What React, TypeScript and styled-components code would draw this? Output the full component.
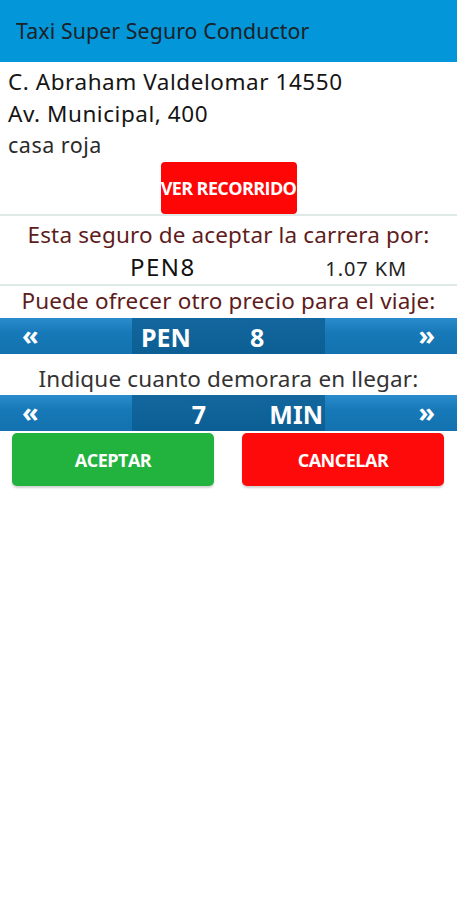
import React from "react";
import styled, { createGlobalStyle } from "styled-components";

const Global = createGlobalStyle`
  html, body { margin: 0; padding: 0; background: #ffffff; }
  body { font-family: "Noto Sans", "Open Sans", sans-serif; }
  * { box-sizing: border-box; }
`;

const Screen = styled.div`
  width: 457px;
  min-height: 900px;
  background: #ffffff;
  display: flex;
  flex-direction: column;
`;

const AppBar = styled.header`
  height: 62px;
  background: #0396d9;
  display: flex;
  align-items: center;
  padding-left: 16px;
  padding-bottom: 1px;
`;

const Title = styled.h1`
  margin: 0;
  font-size: 21.3px;
  font-weight: 400;
  color: #1b2228;
  letter-spacing: 0.1px;
`;

const Address = styled.div`
  display: flex;
  flex-direction: column;
  padding: 4px 0 0 8px;
`;

const AddressLine = styled.div<{ $small?: boolean }>`
  font-size: ${(p) => (p.$small ? "21.5px" : "22.5px")};
  line-height: ${(p) => (p.$small ? "30px" : "32px")};
  letter-spacing: ${(p) => (p.$small ? "0.5px" : "0.55px")};
  color: ${(p) => (p.$small ? "#2a2a2a" : "#151515")};
`;

const Center = styled.div`
  display: flex;
  justify-content: center;
  padding-top: 2px;
`;

const RedSmallButton = styled.button`
  width: 136px;
  height: 52px;
  border: none;
  border-radius: 4px;
  background: #ff0606;
  color: #ffffff;
  font-family: "Open Sans", "Noto Sans", sans-serif;
  font-weight: 700;
  font-size: 18px;
  letter-spacing: -0.6px;
  padding: 0;
  white-space: nowrap;
  overflow: hidden;
  display: flex;
  align-items: center;
  justify-content: center;
`;

const Divider = styled.div`
  height: 2px;
  background: #dfe9e7;
`;

const Question = styled.div<{ $tone?: "red" | "gray"; $top: number }>`
  text-align: center;
  font-size: 22.5px;
  line-height: ${(p) => (p.$tone === "gray" ? "32px" : "30px")};
  padding-top: ${(p) => p.$top}px;
  color: ${(p) => (p.$tone === "gray" ? "#333333" : "#5e1c1c")};
  letter-spacing: 0.15px;
`;

const PriceRow = styled.div`
  display: flex;
  align-items: baseline;
  height: 34px;
  line-height: 34px;
  padding: 0 50px 0 130px;
`;

const Price = styled.span`
  font-size: 24px;
  color: #111111;
  letter-spacing: 1.5px;
`;

const Distance = styled.span`
  margin-left: auto;
  font-size: 20px;
  color: #222222;
  letter-spacing: 0.9px;
`;

const Spinner = styled.div<{ $top: number }>`
  display: grid;
  grid-template-columns: 132px 193px 132px;
  height: 36px;
  margin-top: ${(p) => p.$top}px;
  border-bottom: 2px solid #0a5480;
`;

const SpinSide = styled.div<{ $side: "left" | "right" }>`
  background: linear-gradient(#2a8ccc, #1779b8 40%, #1372af);
  color: #ffffff;
  display: flex;
  align-items: center;
  justify-content: ${(p) => (p.$side === "left" ? "flex-start" : "flex-end")};
  padding: ${(p) => (p.$side === "left" ? "0 0 4px 22px" : "0 22px 4px 0")};
  font-size: 27px;
  font-weight: 700;
  line-height: 1;
`;

const SpinMid = styled.div`
  background: linear-gradient(#12679e, #0c5f94);
  display: grid;
  grid-template-columns: 96px 97px;
  align-items: center;
`;

const SpinValue = styled.span<{ $pad: number; $right?: boolean }>`
  color: #ffffff;
  font-weight: 700;
  font-size: 25px;
  text-align: ${(p) => (p.$right ? "right" : "left")};
  padding-left: ${(p) => (p.$right ? 0 : p.$pad)}px;
  padding-right: ${(p) => (p.$right ? p.$pad : 0)}px;
  padding-top: 2px;
`;

const ActionRow = styled.div`
  display: grid;
  grid-template-columns: 202px 202px;
  justify-content: space-between;
  padding: 2px 13px 0 12px;
`;

const ActionButton = styled.button<{ $kind: "ok" | "cancel" }>`
  height: 53px;
  border: none;
  border-radius: 5px;
  background: ${(p) => (p.$kind === "ok" ? "#22b23e" : "#ff0a0a")};
  box-shadow: 0 2px 2px rgba(0, 0, 0, 0.18);
  color: #ffffff;
  font-family: "Open Sans", "Noto Sans", sans-serif;
  font-weight: 700;
  font-size: 18px;
  letter-spacing: -0.5px;
`;

export default function App() {
  return (
    <Screen>
      <Global />
      <AppBar>
        <Title>Taxi Super Seguro Conductor</Title>
      </AppBar>
      <Address>
        <AddressLine>C. Abraham Valdelomar 14550</AddressLine>
        <AddressLine>Av. Municipal, 400</AddressLine>
        <AddressLine $small>casa roja</AddressLine>
      </Address>
      <Center>
        <RedSmallButton>VER RECORRIDO</RedSmallButton>
      </Center>
      <Divider />
      <Question $top={4}>Esta seguro de aceptar la carrera por:</Question>
      <PriceRow>
        <Price>PEN8</Price>
        <Distance>1.07 KM</Distance>
      </PriceRow>
      <Divider />
      <Question $top={0}>Puede ofrecer otro precio para el viaje:</Question>
      <Spinner $top={2}>
        <SpinSide $side="left">«</SpinSide>
        <SpinMid>
          <SpinValue $pad={9}>PEN</SpinValue>
          <SpinValue $pad={22}>8</SpinValue>
        </SpinMid>
        <SpinSide $side="right">»</SpinSide>
      </Spinner>
      <Question $tone="gray" $top={9}>Indique cuanto demorara en llegar:</Question>
      <Spinner $top={0}>
        <SpinSide $side="left">«</SpinSide>
        <SpinMid>
          <SpinValue $pad={22} $right>7</SpinValue>
          <SpinValue $pad={2} $right>MIN</SpinValue>
        </SpinMid>
        <SpinSide $side="right">»</SpinSide>
      </Spinner>
      <ActionRow>
        <ActionButton $kind="ok">ACEPTAR</ActionButton>
        <ActionButton $kind="cancel">CANCELAR</ActionButton>
      </ActionRow>
    </Screen>
  );
}
